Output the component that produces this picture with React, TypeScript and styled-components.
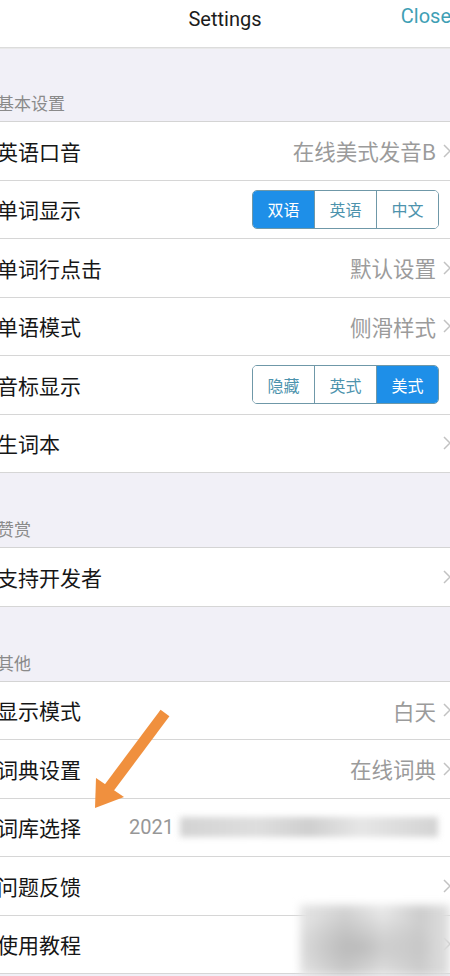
import React from 'react';
import styled, { createGlobalStyle } from 'styled-components';

const GlobalStyle = createGlobalStyle`
  html, body {
    margin: 0;
    padding: 0;
    background: #f1f0f7;
    overflow: hidden;
  }
  body {
    font-family: 'Noto Sans CJK SC', 'Noto Sans', Roboto, sans-serif;
  }
`;

const Screen = styled.div`
  position: relative;
  width: 480px;
  margin-left: -16px;
  height: 976px;
  background: #f1f0f7;
`;

const NavBar = styled.div`
  position: relative;
  height: 47px;
  background: #ffffff;
  border-bottom: 1px solid #dcdcdc;
  box-shadow: 0 1px 0 #e9e9e9;
  display: flex;
  align-items: center;
  justify-content: center;
`;

const NavTitle = styled.div`
  font-family: Roboto, 'Noto Sans', sans-serif;
  font-size: 20px;
  color: #1c1c1c;
  margin-top: -10px;
  margin-left: 2px;
`;

const NavAction = styled.div`
  position: absolute;
  right: 13px;
  top: 4px;
  font-family: Roboto, 'Noto Sans', sans-serif;
  font-size: 20px;
  color: #3f9fb5;
`;

const SectionHeader = styled.div<{ $h: number }>`
  height: ${(p) => p.$h}px;
  box-sizing: border-box;
  display: flex;
  align-items: flex-end;
  padding: 0 0 6px 13px;
  font-size: 17px;
  color: #8a8a8a;
  border-bottom: 1px solid #d4d4d4;
`;

const Group = styled.div`
  background: #ffffff;
`;

const Row = styled.div`
  height: 57.5px;
  border-bottom: 1px solid #d6d6d6;
  display: flex;
  align-items: center;
  padding: 0 13px;
  gap: 7px;
`;

const Label = styled.div`
  font-size: 21px;
  color: #161616;
  flex: 1;
  white-space: nowrap;
`;

const Value = styled.div`
  font-size: 21.5px;
  color: #9b9b9b;
  white-space: nowrap;
`;

const WideValue = styled.div`
  flex: 0 0 322px;
  display: flex;
  align-items: center;
  font-family: Roboto, 'Noto Sans', sans-serif;
  font-size: 20px;
  color: #979797;
`;

const Smudge = styled.span`
  display: inline-block;
  width: 258px;
  height: 20px;
  margin-left: 6px;
  background: linear-gradient(90deg, #d3d3d3, #dedede 30%, #cfcfcf 50%, #e6e6e6 70%, #d3d3d3);
  filter: blur(3px);
`;

const Segmented = styled.div`
  display: flex;
  margin-right: 12px;
  border: 1px solid #6f98a8;
  border-radius: 5px;
  overflow: hidden;
`;

const Segment = styled.div<{ $active?: boolean }>`
  width: 61px;
  height: 37px;
  display: flex;
  align-items: center;
  justify-content: center;
  font-size: 16px;
  color: ${(p) => (p.$active ? '#ffffff' : '#4d93ad')};
  background: ${(p) => (p.$active ? '#1e8fe8' : '#ffffff')};
  & + & {
    border-left: 1px solid #6f98a8;
  }
`;

const Arrow = styled.svg`
  position: absolute;
  left: 101px;
  top: 700px;
`;

const Watermark = styled.div`
  position: absolute;
  left: 316px;
  top: 905px;
  width: 150px;
  height: 71px;
  background:
    radial-gradient(ellipse at 40% 60%, rgba(150,150,150,0.45), rgba(255,255,255,0) 60%),
    linear-gradient(90deg, #e4e4e4, #d2d2d2 30%, #e8e8e8 55%, #cccccc 80%, #e0e0e0);
  filter: blur(4px);
`;

const Chevron = () => (
  <svg width="8" height="14" viewBox="0 0 8 14">
    <path d="M1 1l6 6-6 6" fill="none" stroke="#c2c2c2" strokeWidth="1.5" />
  </svg>
);

type Item = { label: string; value?: string };

const Plain = ({ label, value }: Item) => (
  <Row>
    <Label>{label}</Label>
    {value && <Value>{value}</Value>}
    <Chevron />
  </Row>
);

const Seg = ({ label, options, active }: { label: string; options: string[]; active: number }) => (
  <Row>
    <Label>{label}</Label>
    <Segmented>
      {options.map((o, i) => (
        <Segment key={o} $active={i === active}>
          {o}
        </Segment>
      ))}
    </Segmented>
  </Row>
);

export default function App() {
  return (
    <>
      <GlobalStyle />
      <Screen>
        <NavBar>
          <NavTitle>Settings</NavTitle>
          <NavAction>Close</NavAction>
        </NavBar>

        <SectionHeader $h={74}>基本设置</SectionHeader>
        <Group>
          <Plain label="英语口音" value="在线美式发音B" />
          <Seg label="单词显示" options={['双语', '英语', '中文']} active={0} />
          <Plain label="单词行点击" value="默认设置" />
          <Plain label="单语模式" value="侧滑样式" />
          <Seg label="音标显示" options={['隐藏', '英式', '美式']} active={2} />
          <Plain label="生词本" />
        </Group>

        <SectionHeader $h={75}>赞赏</SectionHeader>
        <Group>
          <Plain label="支持开发者" />
        </Group>

        <SectionHeader $h={75}>其他</SectionHeader>
        <Group>
          <Plain label="显示模式" value="白天" />
          <Plain label="词典设置" value="在线词典" />
          <Row>
            <Label>词库选择</Label>
            <WideValue>
              2021
              <Smudge />
            </WideValue>
          </Row>
          <Plain label="问题反馈" />
          <Plain label="使用教程" />
        </Group>

        <Arrow width="90" height="115" viewBox="0 0 90 115">
          <line x1="80" y1="13" x2="24" y2="88" stroke="#f0903e" strokeWidth="11" />
          <polygon points="10,108 11,78 39,97" fill="#f0903e" />
        </Arrow>
        <Watermark />
      </Screen>
    </>
  );
}
